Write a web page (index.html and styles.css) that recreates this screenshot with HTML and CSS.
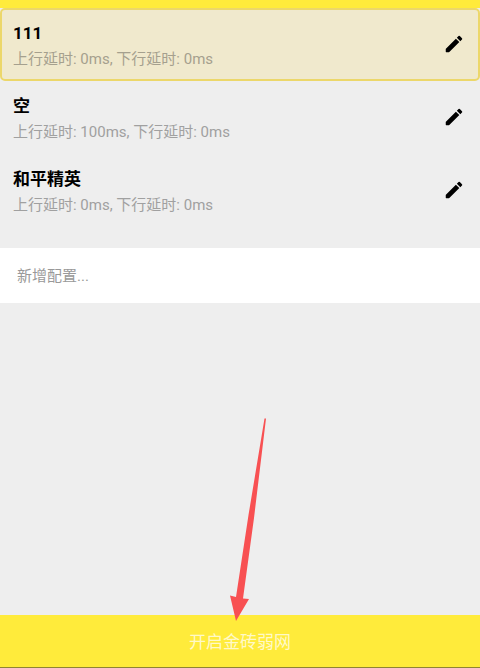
FILE: index.html
```html
<!DOCTYPE html>
<html lang="zh-CN">
<head>
  <meta charset="UTF-8">
  <meta name="viewport" content="width=device-width, initial-scale=1">
  <title>金砖弱网</title>
  <link rel="stylesheet" href="styles.css">
</head>
<body>

  <div class="topbar"></div>

  <main class="main">
    <ul class="profiles">
      <li class="profile selected">
        <div class="info">
          <h2>111</h2>
          <p>上行延时: 0ms, 下行延时: 0ms</p>
        </div>
        <button type="button" class="edit" aria-label="编辑 111">
          <svg viewBox="0 0 24 24"><path d="M3 17.46v3.04c0 .28.22.5.5.5h3.04c.13 0 .26-.05.35-.15L17.81 9.94l-3.75-3.75L3.15 17.1c-.1.1-.15.22-.15.36zM20.71 7.04a1 1 0 0 0 0-1.41l-2.34-2.34a1 1 0 0 0-1.41 0l-1.83 1.83 3.75 3.75 1.83-1.83z"/></svg>
        </button>
      </li>
      <li class="profile">
        <div class="info">
          <h2>空</h2>
          <p>上行延时: 100ms, 下行延时: 0ms</p>
        </div>
        <button type="button" class="edit" aria-label="编辑 空">
          <svg viewBox="0 0 24 24"><path d="M3 17.46v3.04c0 .28.22.5.5.5h3.04c.13 0 .26-.05.35-.15L17.81 9.94l-3.75-3.75L3.15 17.1c-.1.1-.15.22-.15.36zM20.71 7.04a1 1 0 0 0 0-1.41l-2.34-2.34a1 1 0 0 0-1.41 0l-1.83 1.83 3.75 3.75 1.83-1.83z"/></svg>
        </button>
      </li>
      <li class="profile">
        <div class="info">
          <h2>和平精英</h2>
          <p>上行延时: 0ms, 下行延时: 0ms</p>
        </div>
        <button type="button" class="edit" aria-label="编辑 和平精英">
          <svg viewBox="0 0 24 24"><path d="M3 17.46v3.04c0 .28.22.5.5.5h3.04c.13 0 .26-.05.35-.15L17.81 9.94l-3.75-3.75L3.15 17.1c-.1.1-.15.22-.15.36zM20.71 7.04a1 1 0 0 0 0-1.41l-2.34-2.34a1 1 0 0 0-1.41 0l-1.83 1.83 3.75 3.75 1.83-1.83z"/></svg>
        </button>
      </li>
    </ul>

    <button type="button" class="add">新增配置...</button>
  </main>

  <footer class="footer">
    <button type="button" class="start">开启金砖弱网</button>
    <!-- arrow pointing at the start button -->
    <svg class="arrow" viewBox="0 0 40 204" aria-hidden="true">
      <path d="M34.5 1.500H36L24 101 13 181.500l6 .5L6 204 0 178.500l6 1.500L18.500 98z" fill="#f85052"/>
    </svg>
  </footer>

</body>
</html>
```
FILE: styles.css
```css
* {
  box-sizing: border-box;
}

body {
  margin: 0;
  min-height: 100vh;
  display: flex;
  flex-direction: column;
  background-color: #eeeeee;
  font-family: Roboto, "Noto Sans CJK SC", sans-serif;
}

button {
  border: none;
  font-family: inherit;
  cursor: pointer;
}

.topbar {
  height: 8px;
  background-color: #ffeb3b;
}

.main {
  flex: 1;
}

.profiles {
  list-style: none;
  margin: 0 0 21px;
  padding: 0;
}

.profile {
  display: flex;
  align-items: center;
  justify-content: space-between;
  height: 73px;
  padding: 0 13px 2px 11px;
  border: 2px solid transparent;
  border-radius: 5px;
}

.profile.selected {
  background-color: #f0e9cd;
  border-color: #ecd76a;
}

.info {
  padding-top: 5px;
}

.info h2 {
  margin: 0;
  font-size: 17px;
  line-height: 26px;
  color: #000;
}

.info p {
  margin: 0;
  font-size: 15px;
  line-height: 26px;
  color: #a0a0a0;
}

.profile.selected p {
  color: #a5a08e;
}

.edit {
  width: 22px;
  height: 22px;
  padding: 0;
  background: none;
}

.edit svg {
  display: block;
  width: 100%;
}

.add {
  display: block;
  width: 100%;
  height: 55px;
  padding: 0 17px 2px;
  background-color: #fff;
  font-size: 15px;
  text-align: left;
  color: #999;
}

.footer {
  position: relative;
}

.start {
  display: block;
  width: 100%;
  height: 53px;
  padding: 0 6px 2px;
  border-bottom: 1px solid #8f8432;
  background-color: #ffeb3b;
  font-size: 17px;
  color: #fff9c8;
}

.arrow {
  position: absolute;
  bottom: 47px;
  left: 50%;
  width: 40px;
  height: 204px;
  margin-left: -10px;
  pointer-events: none;
}
```
